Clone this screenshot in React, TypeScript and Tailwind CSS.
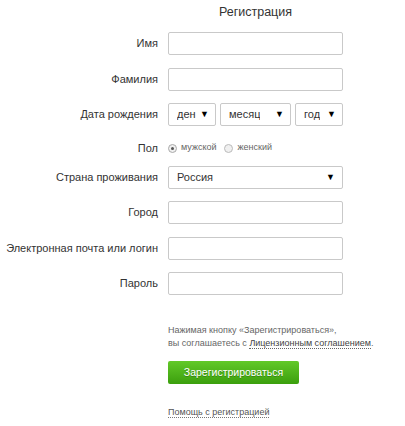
const rows = [
  { label: "Имя", mt: "mt-[12px]" },
  { label: "Фамилия", mt: "mt-[13px]" },
];

function Field() {
  return (
    <input
      type="text"
      className="w-[175px] h-[23px] rounded-[2px] border border-[#c9c9c9] bg-white px-2 text-[11px] outline-none"
    />
  );
}

function Select({ text, width }: { text: string; width: string }) {
  return (
    <div
      className={`${width} h-[23px] rounded-[2px] border border-[#c9c9c9] bg-white flex items-center justify-between pl-[8px] pr-[6px] text-[11px] text-[#333] overflow-hidden`}
    >
      <span className="truncate">{text}</span>
      <span className="text-[9px] text-black leading-none">▼</span>
    </div>
  );
}

function Row({
  label,
  mt,
  children,
}: {
  label: string;
  mt: string;
  children: React.ReactNode;
}) {
  return (
    <div className={`flex items-center gap-[10px] ${mt}`}>
      <label className="w-[158px] text-right text-[11px] text-[#333] whitespace-nowrap">
        {label}
      </label>
      {children}
    </div>
  );
}

export default function App() {
  return (
    <div className="w-[405px] h-[426px] bg-white font-['Liberation_Sans',Arial,sans-serif] text-[#333]">
      <div className="flex">
        <div className="w-[168px]" />
        <h1 className="w-[175px] pt-[4px] text-center text-[12.5px] leading-[16px] text-[#333]">
          Регистрация
        </h1>
      </div>

      {rows.map((r) => (
        <Row key={r.label} label={r.label} mt={r.mt}>
          <Field />
        </Row>
      ))}

      <Row label="Дата рождения" mt="mt-[12px]">
        <div className="flex gap-[4px]">
          <Select text="ден" width="w-[48px]" />
          <Select text="месяц" width="w-[71px]" />
          <Select text="год" width="w-[48px]" />
        </div>
      </Row>

      <Row label="Пол" mt="mt-[12px]">
        <div className="flex items-center h-[20px] text-[9px] text-[#666]">
          <span className="w-[9px] h-[9px] rounded-full border border-[#aaa] bg-[#f0f0f0] flex items-center justify-center mr-[4px]">
            <span className="w-[3px] h-[3px] rounded-full bg-[#555]" />
          </span>
          <span className="mr-[8px]">мужской</span>
          <span className="w-[9px] h-[9px] rounded-full border border-[#bbb] bg-[#f0f0f0] mr-[4px]" />
          <span>женский</span>
        </div>
      </Row>

      <Row label="Страна проживания" mt="mt-[8px]">
        <div className="w-[175px] h-[23px] rounded-[2px] border border-[#c9c9c9] bg-white flex items-center justify-between pl-[8px] pr-[7px] text-[11px] text-[#333]">
          <span>Россия</span>
          <span className="text-[9px] text-black leading-none">▼</span>
        </div>
      </Row>

      <Row label="Город" mt="mt-[12px]">
        <Field />
      </Row>
      <Row label="Электронная почта или логин" mt="mt-[13px]">
        <Field />
      </Row>
      <Row label="Пароль" mt="mt-[12px]">
        <Field />
      </Row>

      <div className="pl-[168px] mt-[29px] text-[9px] leading-[13px] text-[#666]">
        <p>Нажимая кнопку «Зарегистрироваться»,</p>
        <p>
          вы соглашаетесь с{" "}
          <a className="text-[#444] border-b border-dotted border-[#666]">
            Лицензионным соглашением
          </a>
          .
        </p>
        <button className="mt-[11px] w-[131px] h-[23px] rounded-[2px] bg-gradient-to-b from-[#62c928] to-[#3b9f0c] text-white text-[10.5px] [text-shadow:0_1px_0_rgba(0,0,0,0.25)]">
          Зарегистрироваться
        </button>
        <div className="mt-[22px]">
          <a className="text-[#555] border-b border-dotted border-[#777]">
            Помощь с регистрацией
          </a>
        </div>
      </div>
    </div>
  );
}
